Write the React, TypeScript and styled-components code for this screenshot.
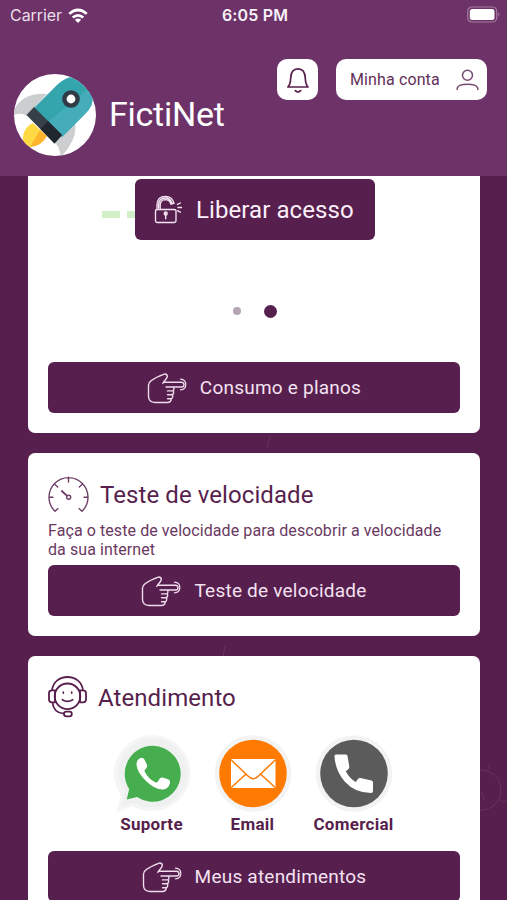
import React from 'react';
import styled, { createGlobalStyle } from 'styled-components';

const plum = '#571f4d';
const header = '#6d3267';

const GlobalStyle = createGlobalStyle`
  * { box-sizing: border-box; }
  html, body { margin: 0; padding: 0; overflow: hidden; }
  body { background: ${plum}; font-family: Roboto, "Liberation Sans", sans-serif; color: ${plum}; }
`;

const Screen = styled.div`
  position: relative;
  width: 507px;
  height: 900px;
  overflow: hidden;
  display: flex;
  flex-direction: column;
  background: ${plum};
`;

const Backdrop = styled.svg`
  position: absolute;
  inset: 0;
`;

const Header = styled.header`
  position: relative;
  flex: none;
  height: 176px;
  background: ${header};
  color: #fff;
`;

const StatusBar = styled.div`
  display: grid;
  grid-template-columns: 1fr auto 1fr;
  align-items: center;
  height: 30px;
  padding: 0 7px 0 10px;
  font: 400 16px/30px Inter, sans-serif;
`;

const Carrier = styled.div`
  display: flex;
  align-items: center;
  gap: 6px;
  color: #eadfe9;
  letter-spacing: -0.05px;
`;

const Clock = styled.div`
  font-weight: 600;
  letter-spacing: 0.15px;
  color: #f8f2f8;
`;

const Battery = styled.div`
  display: flex;
  justify-content: flex-end;
  padding-bottom: 2px;
`;

const HeaderBody = styled.div`
  display: flex;
  align-items: flex-start;
  justify-content: space-between;
  padding: 29px 20px 0 14px;
`;

const Brand = styled.div`
  display: flex;
  align-items: center;
  gap: 13px;
  margin-top: 15px;
`;

const BrandName = styled.h1`
  margin: 0;
  font-size: 34px;
  line-height: 40px;
  font-weight: 400;
  letter-spacing: -0.25px;
  padding-bottom: 2px;
`;

const Actions = styled.div`
  display: flex;
  gap: 18px;
`;

const HeaderButton = styled.button<{ $width: number }>`
  display: flex;
  align-items: center;
  justify-content: ${p => (p.$width > 50 ? 'space-between' : 'center')};
  width: ${p => p.$width}px;
  height: 41px;
  padding: ${p => (p.$width > 50 ? '0 8px 0 14px' : '1px 0 0')};
  border: 0;
  border-radius: 10px;
  background: #fff;
  color: #623058;
  font: 400 16px/20px Roboto, sans-serif;
  letter-spacing: 0.12px;
`;

const Content = styled.main`
  position: relative;
  display: flex;
  flex-direction: column;
  gap: 20px;
  padding: 0 27px 0 28px;
`;

const Card = styled.section<{ $first?: boolean }>`
  flex: none;
  display: flex;
  flex-direction: column;
  padding: 20px;
  padding-top: ${p => (p.$first ? '3px' : '20px')};
  border-radius: ${p => (p.$first ? '0 0 7px 7px' : '7px')};
  background: #fff;
`;

const Slide = styled.div`
  position: relative;
  display: flex;
  justify-content: center;
  height: 125px;
  padding-left: 2px;
`;

const Dashes = styled.div`
  position: absolute;
  left: 54px;
  top: 32px;
  display: flex;
  gap: 7px;
`;

const Dash = styled.span`
  width: 18px;
  height: 7px;
  background: #d2f0c8;
`;

const UnlockButton = styled.button`
  position: relative;
  display: flex;
  align-items: center;
  gap: 13px;
  width: 240px;
  height: 61px;
  padding: 0 0 0 19px;
  border: 0;
  border-radius: 6px;
  background: ${plum};
  color: #fbeffa;
  font: 400 24px/30px Roboto, sans-serif;
  letter-spacing: 0.08px;
  white-space: nowrap;
`;

const Pager = styled.div`
  display: flex;
  align-items: center;
  justify-content: center;
  gap: 23px;
  height: 14px;
  margin-bottom: 44px;
  padding-left: 2px;
`;

const Dot = styled.span<{ $active?: boolean }>`
  width: ${p => (p.$active ? 13 : 8)}px;
  height: ${p => (p.$active ? 13 : 8)}px;
  border-radius: 50%;
  background: ${p => (p.$active ? plum : '#b5a5b4')};
`;

const WideButton = styled.button`
  display: flex;
  align-items: center;
  justify-content: center;
  gap: 13px;
  width: 412px;
  height: 51px;
  border: 0;
  padding: 1px 0 0;
  border-radius: 6px;
  background: ${plum};
  color: #f4e2f2;
  font: 400 19px/24px Roboto, sans-serif;
  letter-spacing: 0.22px;
`;

const CardHead = styled.div`
  display: flex;
  align-items: center;
  gap: 11px;
  height: 42px;
`;

const CardTitle = styled.h2`
  margin: 0;
  padding-top: 1px;
  font-size: 24px;
  line-height: 30px;
  font-weight: 400;
  letter-spacing: 0.08px;
`;

const Description = styled.p`
  margin: 6px 0;
  font-size: 16px;
  line-height: 19px;
  letter-spacing: 0.08px;
  color: #6a3861;
  white-space: nowrap;
`;

const Channels = styled.div`
  display: grid;
  grid-template-columns: repeat(3, 101px);
  justify-content: center;
  margin: 17px 0 16px;
  padding-right: 3px;
`;

const Channel = styled.div`
  display: flex;
  flex-direction: column;
  align-items: center;
  font-weight: 700;
  font-size: 17px;
  line-height: 22px;
  letter-spacing: 0.28px;
`;

const Wifi = () => (
  <svg width="20" height="15" viewBox="0 0 20 15" fill="#fff">
    <path d="M10 15 6.9 11.8Q10 9.4 13.1 11.8Z" />
    <path d="M3.8 8.5Q10 3.3 16.2 8.5L14.4 10.4Q10 6.9 5.6 10.4Z" />
    <path d="M.3 4.9Q10-3.8 19.7 4.9L17.8 6.8Q10 .1 2.2 6.8Z" />
  </svg>
);

const BatteryIcon = () => (
  <svg width="33" height="17" viewBox="0 0 33 17">
    <rect x=".7" y="1" width="29" height="15" rx="4.2" fill="none" stroke="#a47ca0" strokeWidth="1.2" />
    <rect x="2.8" y="3" width="24.7" height="11" rx="2.5" fill="#fff" />
    <path d="M31.2 6.2q2.4 2.2 0 4.5z" fill="#a47ca0" />
  </svg>
);

const Rocket = () => (
  <svg width="82" height="82" viewBox="0 0 82 82">
    <defs><clipPath id="disc"><circle cx="41" cy="41" r="41" /></clipPath></defs>
    <circle cx="41" cy="41" r="41" fill="#fff" />
    <g clipPath="url(#disc)">
      <path d="M0 36Q9 18 33 20L13 42Q7 38 0 41Z" fill="#cdced0" />
      <path d="M61 49Q64 65 47 83Q45 71 40 68Z" fill="#cdced0" />
      <path d="M19 49Q8 54 9 67Q10 72 16 73Q27 72 32 62Z" fill="#ffda45" />
      <path d="M26 56 16 73Q28 72 33 62Z" fill="#ffb52d" />
      <path d="M20 34 43 11Q52 3 58 3Q70 5 78 21Q81 31 70 41L48 63Z" fill="#34a4ad" />
      <path d="M34 48 75 14 78 21Q81 31 70 41L48 63Z" fill="#45adb9" />
      <path d="M20 33 12.5 41 40.5 69.5 48 61Z" fill="#374049" />
      <path d="M34 47 26.5 55 40.5 69.5 48 61Z" fill="#20272d" />
    </g>
    <circle cx="57" cy="25" r="6.6" fill="#fff" stroke="#303b45" strokeWidth="4.4" />
  </svg>
);

const Bell = () => (
  <svg width="24" height="27" viewBox="0 0 24 27" fill="none" stroke={plum} strokeWidth="1.7" strokeLinejoin="round" strokeLinecap="round">
    <path d="M1.8 20H22Q19.5 17.5 19.3 11C19 5 16.5 1.8 12 1.8S4.9 5 4.7 11Q4.5 17.5 1.8 20Z" />
    <path d="M9.3 23.6Q12 26.2 14.7 23.6" />
  </svg>
);

const Person = () => (
  <svg width="23" height="22" viewBox="0 0 23 22" fill="none" stroke="#774b71" strokeWidth="1.5" strokeLinecap="round">
    <circle cx="11.5" cy="6.2" r="5" />
    <path d="M1.2 20.5V19Q2.5 15.2 11.5 15.2T21.8 19V20.5" />
  </svg>
);

const Lock = () => (
  <svg width="29" height="29" viewBox="0 0 29 29" fill="none" stroke="#f6e5f4" strokeWidth="1.35" strokeLinecap="round">
    <rect x="1.5" y="14.5" width="20.5" height="13" rx="1.7" />
    <path d="M3 14.5V10Q3.2 1.3 11.5 1.3Q18 1.3 20 8.2L17 9.2Q15.5 4.6 11.5 4.6Q6.3 4.8 6.2 10V14.5M4.6 13V10Q5 3 11.5 3Q16 3 18 8" />
    <path d="M11.7 18v5.8M23.4 9.3l3-1.3M24 12.5h3.5M23.4 15.7l3 1.5" />
    <circle cx="11.7" cy="18.5" r="1.5" />
  </svg>
);

const Hand = () => (
  <svg width="40" height="31" viewBox="0 0 40 31" fill="none" stroke="#efdced" strokeWidth="1.4" strokeLinejoin="round" strokeLinecap="round">
    <path d="M17 9.3H34.5Q37 9.5 37 11.7T34.5 14H19M25.5 14Q27 14 27 15.8T25.3 17.9H20.5M26 17.9Q27 18.5 26.6 20T24.8 21.8H20.5M25.3 21.9Q26.3 22.5 25.5 24.3T24 25.7H20.5M24.2 25.8Q24.2 29.5 20.5 29.5H8Q1.5 29.5 1.5 23V12Q1.5 9.5 4 7.8Q9 4 17.3 1.1Q20 .8 20.3 3.2Q20.3 4.8 17 8.5L15.8 10.4" />
    <path d="M33.5 6.2Q38.8 6.5 38.8 11.6T33.5 16.8" strokeWidth="1.25" />
  </svg>
);

const Gauge = () => (
  <svg width="41" height="37" viewBox="0 0 41 37" fill="none" stroke="#6d3d66" strokeWidth="1.35" strokeLinecap="round">
    <path d="M7 35.2A19.5 19.5 0 1 1 34 35.2M7 35.2 10 32.6M34 35.2 31 32.6M20.5 1.2V6M1.2 21.2H5M36 21.2H39.8M7 8.5 9.7 11M34 8.5 31.3 11" />
    <circle cx="20.7" cy="21.2" r="2" />
    <path d="M13.8 15 18.8 19.7" strokeWidth="1.8" />
  </svg>
);

const Agent = () => (
  <svg width="39" height="42" viewBox="0 0 39 42" fill="none" stroke={plum} strokeWidth="1.8" strokeLinecap="round" strokeLinejoin="round">
    <circle cx="19.5" cy="20.3" r="12.8" />
    <path d="M4 14.3C5 5.5 12 1 19.5 1S34 5.5 35 14.3M7 14.3H4Q1 14.3 1 17V23.5Q1 26.3 4 26.3H7ZM32 14.3H35Q38 14.3 38 17V23.5Q38 26.3 35 26.3H32ZM4.5 26.5Q5.5 37 16 37.7" />
    <rect x="16" y="35.7" width="7.8" height="4.6" rx="2.3" />
    <path d="M14.3 23.7Q19.5 27 24.7 23.7M15.3 16v1.2M23.7 16v1.2" strokeWidth="1.6" />
  </svg>
);

const Whatsapp = () => (
  <svg width="78" height="78" viewBox="0 0 78 78">
    <path d="M40 0A39 38 0 1 1 19 71L3 78 8 61Q1 50 1 38A39 38 0 0 1 40 0Z" fill="#f5f5f5" />
    <path d="M40 3.5A35 34.5 0 1 1 22 68L8 71 12 57Q5.5 49 5.5 38A35 34.5 0 0 1 40 3.5Z" fill="#eff0f0" />
    <path d="M39.5 10.8A28 28 0 1 1 24 62L13.7 64.5 16.2 54A28 28 0 0 1 39.5 10.8Z" fill="#47ae4f" />
    <path d="M27.6 23Q30 22.2 31.4 24.6L34 29.8Q34.8 32.4 32.3 34.2Q31 35.4 32 37.3Q35.7 44.2 41.8 47Q43.7 48 44.9 46.5L46.6 43.7Q47.8 42 50.5 42.7L55 44.3Q57.8 45.4 56.8 48.5Q55.6 53.7 50 54.6Q42 54.8 33 46Q24.3 37.5 23.5 29.8Q23.4 24.6 27.6 23Z" fill="#fff" />
  </svg>
);

const Mail = () => (
  <svg width="78" height="78" viewBox="0 0 78 78">
    <circle cx="39" cy="38.5" r="38.3" fill="#f3f3f3" />
    <circle cx="39" cy="38.5" r="33.8" fill="#ff7a00" />
    <rect x="17" y="24" width="44.5" height="29" rx="1" fill="#fff" />
    <path d="M17 24.7 34 41Q39.2 46.3 44.5 41L61.5 24.7M17.3 52.5 32 39M61.2 52.5 46.5 39" fill="none" stroke="#ff7a00" strokeWidth="1.5" />
  </svg>
);

const Phone = () => (
  <svg width="78" height="78" viewBox="0 0 78 78">
    <circle cx="39" cy="38.5" r="38.3" fill="#f3f3f3" />
    <circle cx="39" cy="38.5" r="33.8" fill="#5b5b5b" />
    <path d="M21 19.5H31Q32.3 19.5 32.5 21L34.3 31.7Q34.5 33 33.5 34L30.8 36.3Q34.5 43.5 40.7 47L43 44Q44 42.8 45.4 43.1L56.5 45.4Q58 45.8 58 47.2V56Q58 58 56 58Q40 58 29.7 46.5Q20.5 36.2 19.5 21.5Q19.3 19.5 21 19.5Z" fill="#fff" />
  </svg>
);

export default function App() {
  return (
    <Screen>
      <GlobalStyle />
      <Backdrop width="507" height="900" viewBox="0 0 507 900" fill="none" stroke="#67335d" strokeWidth="1">
        <path d="M267 447Q268 440 271 436M223 657 225 646M488 769 490 765M500 800Q503 803 507 801M481 793Q485 796 484 801" />
        <circle cx="481" cy="790" r="20" />
      </Backdrop>
      <Header>
        <StatusBar>
          <Carrier>Carrier <Wifi /></Carrier>
          <Clock>6:05 PM</Clock>
          <Battery><BatteryIcon /></Battery>
        </StatusBar>
        <HeaderBody>
          <Brand><Rocket /><BrandName>FictiNet</BrandName></Brand>
          <Actions>
            <HeaderButton $width={41} aria-label="Notificações"><Bell /></HeaderButton>
            <HeaderButton $width={151}>Minha conta<Person /></HeaderButton>
          </Actions>
        </HeaderBody>
      </Header>
      <Content>
        <Card $first>
          <Slide>
            <Dashes><Dash /><Dash /></Dashes>
            <UnlockButton><Lock />Liberar acesso</UnlockButton>
          </Slide>
          <Pager><Dot /><Dot $active /></Pager>
          <WideButton><Hand />Consumo e planos</WideButton>
        </Card>
        <Card>
          <CardHead><Gauge /><CardTitle>Teste de velocidade</CardTitle></CardHead>
          <Description>Faça o teste de velocidade para descobrir a velocidade<br />da sua internet</Description>
          <WideButton><Hand />Teste de velocidade</WideButton>
        </Card>
        <Card>
          <CardHead><Agent /><CardTitle>Atendimento</CardTitle></CardHead>
          <Channels>
            <Channel><Whatsapp />Suporte</Channel>
            <Channel><Mail />Email</Channel>
            <Channel><Phone />Comercial</Channel>
          </Channels>
          <WideButton><Hand />Meus atendimentos</WideButton>
        </Card>
      </Content>
    </Screen>
  );
}
